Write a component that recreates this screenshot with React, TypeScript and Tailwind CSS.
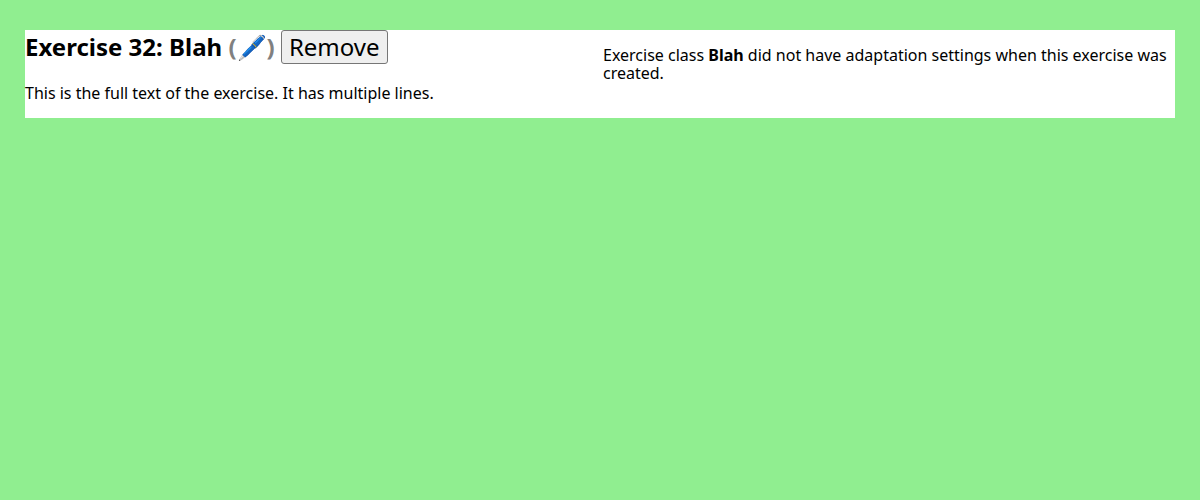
export default function App() {
  return (
    <main className="min-h-screen bg-[#90ee90] px-[25px] py-[30px] font-['Noto_Sans',sans-serif] text-base leading-[18px] text-black">
      <div className="grid grid-cols-2 gap-x-1.5 bg-white">
        <section>
          <h2 className="text-2xl leading-[34px] font-bold">
            Exercise 32: Blah{' '}
            <button type="button" aria-label="Edit" className="font-bold text-[#808080]">
              (🖊️)
            </button>{' '}
            <button
              type="button"
              className="rounded-[3px] border border-[#767676] bg-[#efefef] px-[7px] leading-8 font-normal"
            >
              Remove
            </button>
          </h2>
          <p className="mt-5 mb-4">This is the full text of the exercise. It has multiple lines.</p>
        </section>
        <section>
          <p className="my-4">
            Exercise class <b>Blah</b> did not have adaptation settings when this exercise was created.
          </p>
        </section>
      </div>
    </main>
  );
}
